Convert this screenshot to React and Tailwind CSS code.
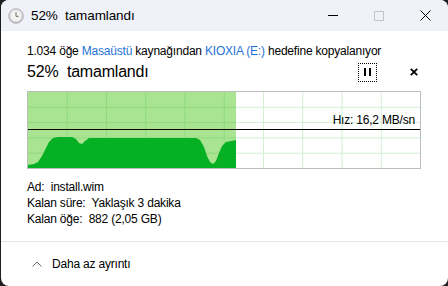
import React from "react";

function ClockIcon() {
  return (
    <svg width="16" height="16" viewBox="0 0 16 16">
      <defs>
        <linearGradient id="cg" x1="0" y1="0" x2="0" y2="1">
          <stop offset="0" stopColor="#fafafa" />
          <stop offset="1" stopColor="#d4d4d4" />
        </linearGradient>
      </defs>
      <circle cx="8" cy="8" r="7.2" fill="url(#cg)" stroke="#9a9a9a" strokeWidth="0.9" />
      <circle cx="8" cy="8" r="5.6" fill="#f4f4f4" stroke="#c8c8c8" strokeWidth="0.5" />
      <path d="M8 4.3V8.3H10.6" fill="none" stroke="#6a6a6a" strokeWidth="1" />
    </svg>
  );
}

function Graph() {
  const vx = [1, 2, 3, 4, 5, 6, 7, 8, 9].map((k) => k * 39.25);
  const hy = [1, 2, 3, 4].map((k) => k * 15.3);
  const curve =
    "M0 76 L0 73 L6 72 L10 70 L14 64 L18 56 L21 50 L25 46 L30 45 L44 45 L48 47 L51 51 L54 52 L57 49 L61 46 L100 46 L140 46 L168 46 L172 48 L176 55 L179 64 L182 70 L185 72 L188 69 L191 61 L194 54 L198 50 L203 49 L208 48 L208 76 Z";
  return (
    <svg width="392" height="76" viewBox="0 0 392 76" className="block">
      <rect x="0" y="0" width="392" height="76" fill="#ffffff" />
      {vx.map((x) => (
        <line key={"w" + x} x1={x} y1="0" x2={x} y2="76" stroke="#d3f0d3" strokeWidth="1" />
      ))}
      {hy.map((y) => (
        <line key={"h" + y} x1="0" y1={y} x2="392" y2={y} stroke="#d3f0d3" strokeWidth="1" />
      ))}
      <rect x="0" y="0" width="208" height="76" fill="#a9e492" />
      {vx.filter((x) => x < 208).map((x) => (
        <line key={"g" + x} x1={x} y1="0" x2={x} y2="76" stroke="#8fda7c" strokeWidth="1" />
      ))}
      {hy.map((y) => (
        <line key={"gh" + y} x1="0" y1={y} x2="208" y2={y} stroke="#8fda7c" strokeWidth="1" />
      ))}
      <path d={curve} fill="#06b025" />
      <line x1="0" y1="37.5" x2="392" y2="37.5" stroke="#000" strokeWidth="1" />
    </svg>
  );
}

export default function App() {
  const font = { fontFamily: '"Segoe UI", "Liberation Sans", Arial, sans-serif' };
  return (
    <div className="w-[448px] h-[286px] bg-[#1f1f1f] pl-[1px] overflow-hidden" style={font}>
      <div className="h-full w-[447px] rounded-[8px] overflow-hidden bg-white flex flex-col text-black">
        {/* title bar */}
        <div className="h-[31px] bg-[#eff2f9] flex items-center shrink-0">
          <div className="pl-[7px] flex items-center">
            <ClockIcon />
          </div>
          <div className="pl-[7px] text-[13.5px] leading-none tracking-[-0.1px]">52%&nbsp; tamamlandı</div>
          <div className="ml-auto flex h-full">
            <div className="w-[46px] h-full flex items-center justify-center">
              <div className="w-[10px] h-[1px] bg-black" />
            </div>
            <div className="w-[46px] h-full flex items-center justify-center">
              <div className="w-[10px] h-[10px] border border-[#c4c4c4] rounded-[1px]" />
            </div>
            <div className="w-[46px] h-full flex items-center justify-center">
              <svg width="11" height="11" viewBox="0 0 11 11">
                <path d="M0.5 0.5L10.5 10.5M10.5 0.5L0.5 10.5" stroke="#000" strokeWidth="1" />
              </svg>
            </div>
          </div>
        </div>

        {/* body */}
        <div className="flex-1 flex flex-col px-[26px]">
          <div className="pt-[12px] text-[12px] leading-[16px] tracking-[-0.2px]">
            1.034 öğe <span className="text-[#1f73d6]">Masaüstü</span> kaynağından{" "}
            <span className="text-[#1f73d6]">KIOXIA (E:)</span> hedefine kopyalanıyor
          </div>
          <div className="flex items-center h-[22px] mt-[2px]">
            <div className="text-[16px] leading-none tracking-[-0.2px]">52%&nbsp; tamamlandı</div>
            <div className="ml-auto flex items-center">
              <div className="w-[19px] h-[19px] border border-dotted border-black flex items-center justify-center gap-[3px]">
                <div className="w-[2px] h-[8px] bg-black" />
                <div className="w-[2px] h-[8px] bg-black" />
              </div>
              <div className="ml-[33px] mr-[4px]">
                <svg width="8" height="8" viewBox="0 0 8 8">
                  <path d="M0.8 0.8L7.2 7.2M7.2 0.8L0.8 7.2" stroke="#000" strokeWidth="1.8" />
                </svg>
              </div>
            </div>
          </div>
          <div className="mt-[8px] relative w-[394px] border border-[#bdbdbd]">
            <Graph />
            <div className="absolute right-[5px] top-[22px] text-[12px] leading-none tracking-[-0.2px]">Hız: 16,2 MB/sn</div>
          </div>
          <div className="mt-[10px] text-[12px] leading-[16px] tracking-[-0.2px]">
            <div>Ad:&nbsp; install.wim</div>
            <div>Kalan süre:&nbsp; Yaklaşık 3 dakika</div>
            <div>Kalan öğe:&nbsp; 882 (2,05 GB)</div>
          </div>
        </div>

        {/* footer */}
        <div className="h-[45px] border-t border-[#e5e5e5] flex items-center pl-[31px] shrink-0">
          <svg width="10" height="6" viewBox="0 0 10 6">
            <path d="M0.5 5.5L5 1L9.5 5.5" fill="none" stroke="#6b6b6b" strokeWidth="1" />
          </svg>
          <div className="ml-[10px] text-[12px] leading-none tracking-[-0.2px]">Daha az ayrıntı</div>
        </div>
      </div>
    </div>
  );
}
